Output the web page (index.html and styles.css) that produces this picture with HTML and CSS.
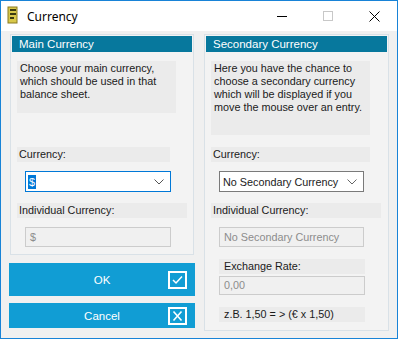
FILE: index.html
```html
<!DOCTYPE html>
<html lang="en">
<head>
    <meta charset="UTF-8">
    <title>Currency</title>
    <link rel="stylesheet" href="styles.css">
</head>
<body>
    <div class="window">
        <div class="titlebar">
            <svg class="app-icon" width="12" height="18" viewBox="0 0 12 18">
                <rect x="1" y="1" width="9" height="16" fill="#d8c84a" stroke="#8a7a20" stroke-width="1"/>
                <rect x="3" y="3" width="6" height="2" fill="#3a3a10"/>
                <rect x="3" y="7" width="6" height="2" fill="#3a3a10"/>
                <rect x="3" y="11" width="4" height="2" fill="#3a3a10"/>
            </svg>
            <span class="title">Currency</span>
            <div class="controls">
                <span class="ctrl"><svg width="10" height="10" viewBox="0 0 10 10"><line x1="0" y1="5.5" x2="10" y2="5.5" stroke="#000" stroke-width="1"/></svg></span>
                <span class="ctrl"><svg width="10" height="10" viewBox="0 0 10 10"><rect x="0.5" y="0.5" width="9" height="9" fill="none" stroke="#c8c8c8" stroke-width="1"/></svg></span>
                <span class="ctrl"><svg width="11" height="11" viewBox="0 0 11 11"><path d="M0.5 0.5 L10.5 10.5 M10.5 0.5 L0.5 10.5" stroke="#000" stroke-width="1"/></svg></span>
            </div>
        </div>
        <div class="client">
            <div class="left-col">
                <div class="panel panel-main">
                    <div class="panel-head">Main Currency</div>
                    <div class="desc">Choose your main currency, which should be used in that balance sheet.</div>
                    <div class="label label-cur">Currency:</div>
                    <div class="combo combo-focus">
                        <span class="sel">$</span>
                        <svg class="chev" width="10" height="6" viewBox="0 0 10 6"><path d="M0.5 0.5 L5 5 L9.5 0.5" fill="none" stroke="#555" stroke-width="1"/></svg>
                    </div>
                    <div class="label label-ind">Individual Currency:</div>
                    <div class="field">$</div>
                </div>
                <div class="btn btn-ok">
                    <span>OK</span>
                    <svg class="btn-icon" width="19" height="18" viewBox="0 0 19 18"><rect x="1" y="1" width="17" height="16" fill="none" stroke="#fff" stroke-width="2"/><path d="M5 9 L8 12 L14 5.5" fill="none" stroke="#fff" stroke-width="1.5"/></svg>
                </div>
                <div class="btn btn-cancel">
                    <span>Cancel</span>
                    <svg class="btn-icon" width="19" height="18" viewBox="0 0 19 18"><rect x="1" y="1" width="17" height="16" fill="none" stroke="#fff" stroke-width="2"/><path d="M5.5 4.5 L13.5 13.5 M13.5 4.5 L5.5 13.5" fill="none" stroke="#fff" stroke-width="1.6"/></svg>
                </div>
            </div>
            <div class="panel panel-second">
                <div class="panel-head">Secondary Currency</div>
                <div class="desc desc-tall">Here you have the chance to choose a secondary currency which will be displayed if you move the mouse over an entry.</div>
                <div class="label label-cur2">Currency:</div>
                <div class="combo combo2">
                    <span>No Secondary Currency</span>
                    <svg class="chev" width="10" height="6" viewBox="0 0 10 6"><path d="M0.5 0.5 L5 5 L9.5 0.5" fill="none" stroke="#666" stroke-width="1"/></svg>
                </div>
                <div class="label label-ind">Individual Currency:</div>
                <div class="field field2">No Secondary Currency</div>
                <div class="label label-rate">Exchange Rate:</div>
                <div class="field field-rate">0,00</div>
                <div class="label label-example">z.B. 1,50 = &gt; (&euro; x 1,50)</div>
            </div>
        </div>
    </div>
</body>
</html>
```

FILE: styles.css
```css
/* Currency dialog */
body {
    margin: 0;
    padding: 0;
    font-family: 'Liberation Sans', Arial, sans-serif;
    font-size: 11px;
    color: #1a1a1a;
}

.window {
    width: 398px;
    height: 339px;
    box-sizing: border-box;
    border: 1px solid #1883d7;
    background-color: #f0f0f0;
    display: flex;
    flex-direction: column;
}

.titlebar {
    height: 30px;
    background-color: #fff;
    display: flex;
    align-items: center;
    flex-shrink: 0;
}

.app-icon {
    margin-left: 6px;
    margin-top: -2px;
}

.title {
    font-family: 'Noto Sans', 'Open Sans', sans-serif;
    font-size: 12px;
    margin-left: 8px;
    color: #000;
}

.controls {
    margin-left: auto;
    display: flex;
    height: 100%;
}

.ctrl {
    width: 46px;
    display: flex;
    align-items: center;
    justify-content: center;
}

.client {
    flex: 1;
    display: flex;
    padding: 3px 8px 7px 8px;
    gap: 9px;
}

.left-col {
    width: 186px;
    display: flex;
    flex-direction: column;
}

.panel {
    border: 1px solid #d9e1e7;
    background-color: #f3f3f3;
    padding: 1px;
}

.panel-main {
    margin: 0 1px;
    height: 221px;
    box-sizing: border-box;
}

.panel-second {
    width: 185px;
    box-sizing: border-box;
    height: 297px;
}

.panel-head {
    background-color: #07789d;
    color: #fff;
    height: 16px;
    line-height: 16px;
    padding-left: 7px;
    font-size: 11.5px;
}

.desc {
    background-color: #ebebeb;
    margin: 9px 0 0 5px;
    width: 159px;
    height: 52px;
    box-sizing: border-box;
    padding: 1px 3px;
    line-height: 13px;
    font-size: 10.8px;
}

.desc-tall {
    height: 74px;
}

.label {
    background-color: #ebebeb;
    height: 15px;
    line-height: 15px;
    padding-left: 2px;
    margin-left: 5px;
    font-size: 10.8px;
    box-sizing: border-box;
}

.label-cur {
    margin-top: 34px;
    width: 153px;
}

.label-cur2 {
    margin-top: 12px;
    width: 159px;
}

.label-ind {
    margin-top: 11px;
    width: 170px;
}

.combo {
    margin: 9px 0 0 13px;
    width: 146px;
    height: 21px;
    box-sizing: border-box;
    border: 1px solid #7a7a7a;
    background-color: #fff;
    display: flex;
    align-items: center;
    padding: 0 6px 0 2px;
    font-size: 10.8px;
}

.combo-focus {
    border-color: #0078d7;
}

.combo2 {
    width: 145px;
    padding-left: 3px;
}

.sel {
    background-color: #0078d7;
    color: #fff;
    padding: 0 1px;
    line-height: 14px;
}

.chev {
    margin-left: auto;
}

.field {
    margin: 9px 0 0 13px;
    width: 146px;
    height: 20px;
    box-sizing: border-box;
    border: 1px solid #cccccc;
    background-color: #f0f0f0;
    color: #8c8c8c;
    line-height: 18px;
    padding-left: 4px;
    font-size: 10.8px;
}

.field2 {
    width: 145px;
}

.label-rate {
    margin: 12px 0 0 13px;
    width: 146px;
    padding-left: 5px;
}

.field-rate {
    margin-top: 2px;
    height: 19px;
    line-height: 17px;
}

.label-example {
    margin: 12px 0 0 13px;
    width: 146px;
    padding-left: 5px;
}

.btn {
    background-color: #119dd4;
    color: #fff;
    height: 33px;
    display: flex;
    align-items: center;
    justify-content: center;
    position: relative;
    font-size: 11.5px;
    cursor: pointer;
}

.btn-ok {
    margin-top: 8px;
}

.btn-cancel {
    margin-top: 7px;
    height: 25px;
}

.btn-icon {
    position: absolute;
    right: 8px;
}
```
